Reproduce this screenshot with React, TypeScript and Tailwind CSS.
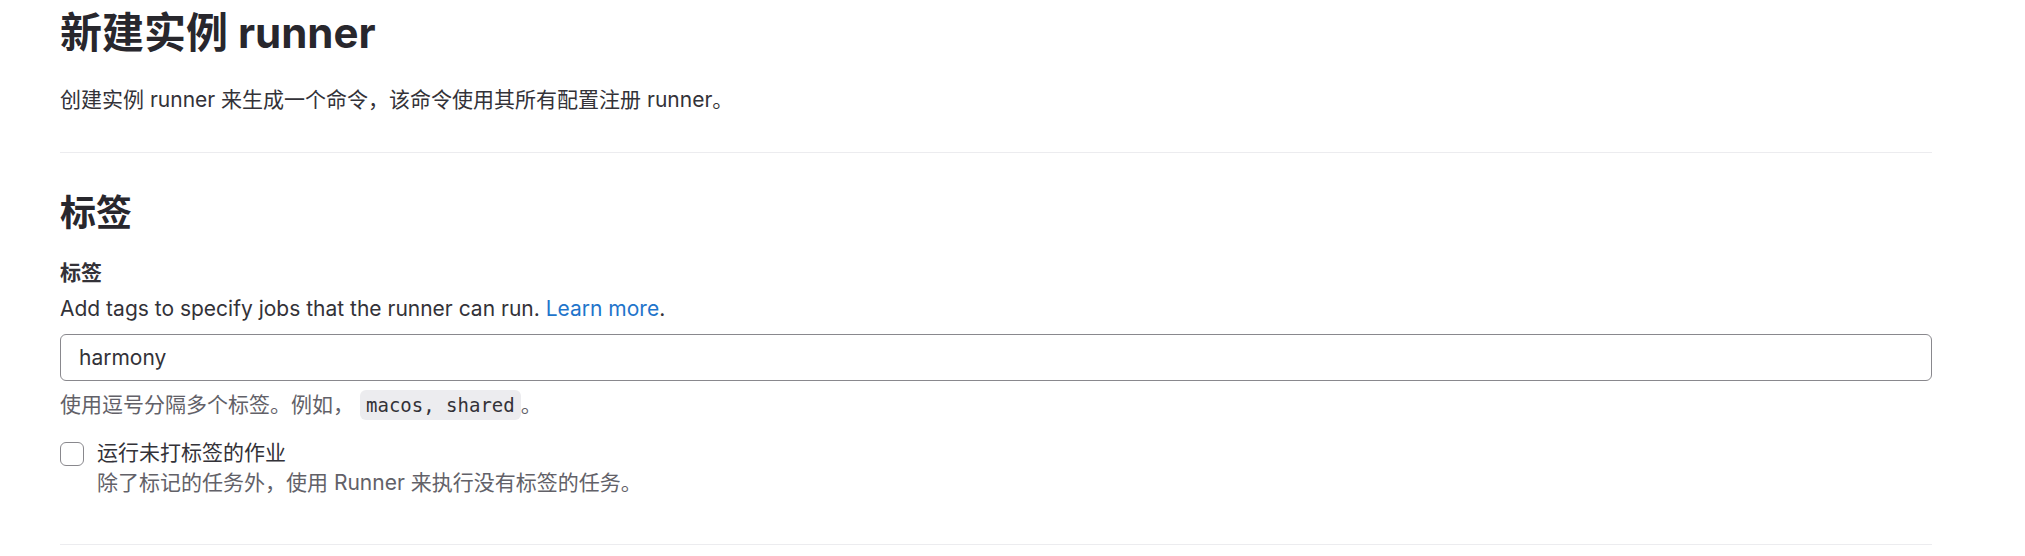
import { useState } from 'react'

export default function App() {
  const [tags, setTags] = useState('harmony')
  const [runUntagged, setRunUntagged] = useState(false)

  return (
    <div className="min-h-[556px] bg-white font-['Inter','Noto_Sans_CJK_SC',sans-serif] text-[#333238]">
      <div className="w-[1872px] ml-[60px] pt-[7px]">
        <h1 className="text-[42px] leading-[52px] font-bold text-[#28272d]">新建实例 runner</h1>
        <p className="mt-[26px] text-[21px] leading-[30px]">
          创建实例 runner 来生成一个命令，该命令使用其所有配置注册 runner。
        </p>
        <hr className="mt-[37px] border-t border-[#ececef]" />

        <h2 className="mt-[38px] text-[36px] leading-[45px] font-bold text-[#28272d]">标签</h2>

        <div className="mt-[22px] flex flex-col">
          <label htmlFor="tags" className="text-[21px] leading-[30px] font-bold">标签</label>
          <p className="mt-[6px] text-[21px] leading-[30px]">
            Add tags to specify jobs that the runner can run.{' '}
            <a href="#" className="text-[#1f75cb]">Learn more</a>.
          </p>
          <input
            id="tags"
            value={tags}
            onChange={(e) => setTags(e.target.value)}
            className="mt-[10px] h-[47px] w-full rounded-[6px] border border-[#89888d] px-[18px] text-[21px] text-[#333238] outline-none"
          />
          <p className="mt-[9px] flex items-center text-[21px] leading-[30px] text-[#626168]">
            使用逗号分隔多个标签。例如，
            <code className="ml-[6px] rounded-[6px] bg-[#ececef] px-[6px] font-['DejaVu_Sans_Mono',monospace] text-[19px] leading-[30px] text-[#333238]">
              macos, shared
            </code>
            。
          </p>
        </div>

        <label className="mt-[18px] flex gap-[13px] cursor-pointer">
          <span className="pt-[4px]">
            <input
              type="checkbox"
              checked={runUntagged}
              onChange={(e) => setRunUntagged(e.target.checked)}
              className="block h-[24px] w-[24px] appearance-none rounded-[6px] border border-[#89888d] bg-white checked:bg-[#1f75cb]"
            />
          </span>
          <span className="flex flex-col text-[21px] leading-[30px]">
            <span>运行未打标签的作业</span>
            <span className="text-[#626168]">除了标记的任务外，使用 Runner 来执行没有标签的任务。</span>
          </span>
        </label>

        <hr className="mt-[46px] border-t border-[#ececef]" />
      </div>
    </div>
  )
}
